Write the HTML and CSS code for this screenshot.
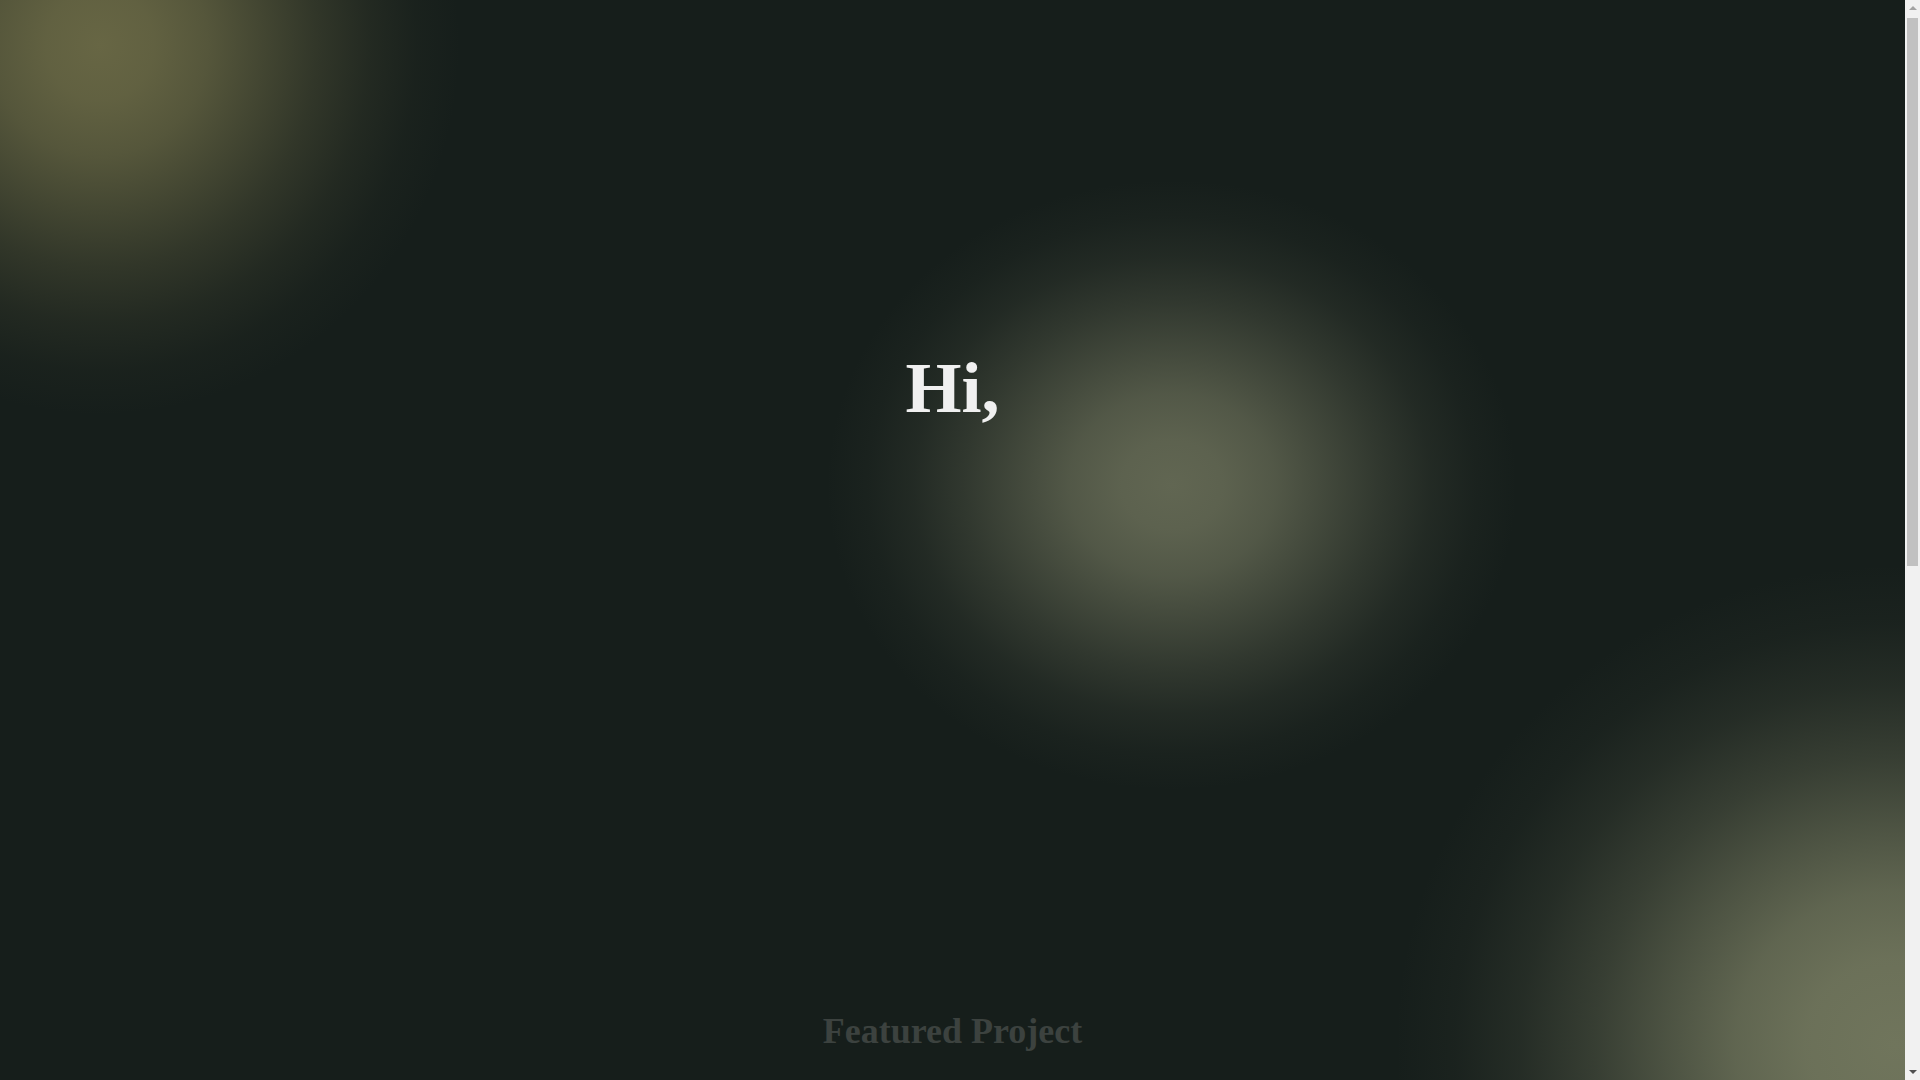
FILE: index.html
```html
<!DOCTYPE html>
<html lang="en">
<head>
<meta charset="utf-8">
<title>Portfolio</title>
<link rel="stylesheet" href="styles.css">
</head>
<body>
<main class="page">
  <section class="hero">
    <h1 class="greeting">Hi,</h1>
  </section>
  <section class="featured">
    <h2 class="section-title">Featured Project</h2>
  </section>
</main>
<aside class="scrollbar" aria-hidden="true">
  <div class="sb-arrow sb-up"></div>
  <div class="sb-track"><div class="sb-thumb"></div></div>
  <div class="sb-arrow sb-down"></div>
</aside>
</body>
</html>
```

FILE: styles.css
```css
html {
  background-color: #161e1b;
}

body {
  margin: 0;
  display: flex;
  align-items: flex-start;
  font-family: "Liberation Serif", "Times New Roman", serif;
  color: #f0f0f0;
  background-color: #161e1b;
  background-image:
    radial-gradient(ellipse 360px 370px at 100px 45px,
      rgba(103, 102, 68, 1) 0%,
      rgba(103, 102, 68, 0.93) 15%,
      rgba(103, 102, 68, 0.78) 30%,
      rgba(103, 102, 68, 0.56) 45%,
      rgba(103, 102, 68, 0.34) 60%,
      rgba(103, 102, 68, 0.16) 75%,
      rgba(103, 102, 68, 0.05) 88%,
      rgba(103, 102, 68, 0) 100%),
    radial-gradient(ellipse 345px 305px at 1172px 485px,
      rgba(97, 102, 82, 1) 0%,
      rgba(97, 102, 82, 0.94) 15%,
      rgba(97, 102, 82, 0.8) 30%,
      rgba(97, 102, 82, 0.58) 45%,
      rgba(97, 102, 82, 0.36) 60%,
      rgba(97, 102, 82, 0.17) 75%,
      rgba(97, 102, 82, 0.06) 88%,
      rgba(97, 102, 82, 0) 100%),
    radial-gradient(ellipse 500px 480px at 1895px 1045px,
      rgba(112, 117, 92, 1) 0%,
      rgba(112, 117, 92, 0.95) 18%,
      rgba(112, 117, 92, 0.82) 32%,
      rgba(112, 117, 92, 0.6) 46%,
      rgba(112, 117, 92, 0.37) 60%,
      rgba(112, 117, 92, 0.17) 75%,
      rgba(112, 117, 92, 0.05) 88%,
      rgba(112, 117, 92, 0) 100%);
  background-repeat: no-repeat;
  background-attachment: fixed;
}

.page {
  flex: 1;
  display: flex;
  flex-direction: column;
}

.hero {
  height: 1010px;
  box-sizing: border-box;
  padding-top: 347px;
  text-align: center;
}

.greeting {
  margin: 0;
  font-size: 72px;
  font-weight: 700;
  line-height: normal;
  color: #f0f0f0;
}

.featured {
  min-height: 1052px;
  text-align: center;
}

.section-title {
  margin: 0;
  font-size: 36px;
  font-weight: 700;
  line-height: normal;
  color: #3c423f;
}

/* browser scrollbar */
.scrollbar {
  position: sticky;
  top: 0;
  flex: 0 0 15px;
  width: 15px;
  height: 100vh;
  display: flex;
  flex-direction: column;
  background: #f1f1f1;
}

.sb-arrow {
  flex: 0 0 16px;
  display: flex;
  align-items: center;
  justify-content: center;
}

.sb-arrow::before {
  content: "";
  width: 0;
  height: 0;
  border-left: 4px solid transparent;
  border-right: 4px solid transparent;
}

.sb-up::before {
  border-bottom: 4px solid #a3a3a3;
}

.sb-down::before {
  border-top: 4px solid #505050;
}

.sb-track {
  flex: 1;
  display: flex;
  flex-direction: column;
  padding: 2px 2px 0;
}

.sb-thumb {
  height: 548px;
  background: #c1c1c1;
}
```
